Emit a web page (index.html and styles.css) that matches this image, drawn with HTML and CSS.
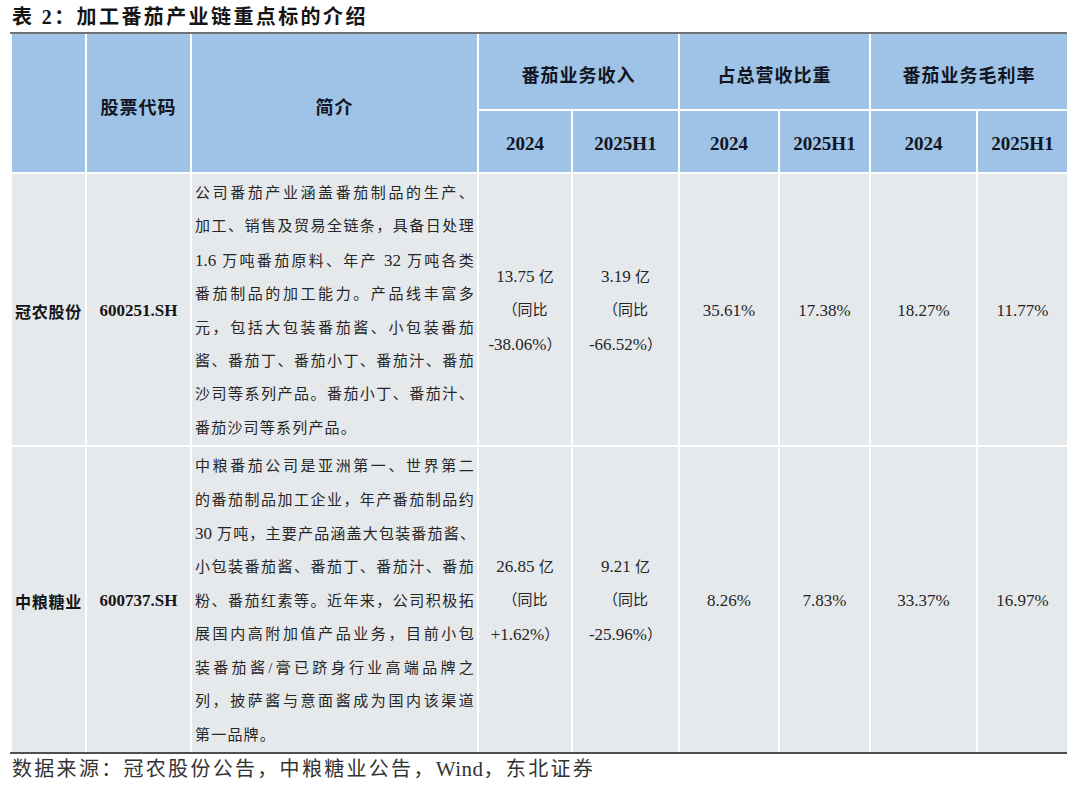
FILE: index.html
```html
<!DOCTYPE html>
<html lang="zh-CN">
<head>
<meta charset="utf-8">
<title>加工番茄产业链重点标的介绍</title>
<link rel="stylesheet" href="styles.css">
</head>
<body>
<div class="page">
  <h1 class="title">表 <span class="lat">2</span>：加工番茄产业链重点标的介绍</h1>
  <div class="figure">
    <div class="grid">
      <div class="cell th tall"></div>
      <div class="cell th tall">股票代码</div>
      <div class="cell th tall">简介</div>
      <div class="cell th group">番茄业务收入</div>
      <div class="cell th group">占总营收比重</div>
      <div class="cell th group">番茄业务毛利率</div>
      <div class="cell th sub">2024</div>
      <div class="cell th sub">2025H1</div>
      <div class="cell th sub">2024</div>
      <div class="cell th sub">2025H1</div>
      <div class="cell th sub">2024</div>
      <div class="cell th sub">2025H1</div>

      <div class="cell name">冠农股份</div>
      <div class="cell code">600251.SH</div>
      <div class="cell desc">
        <span class="ln">公司番茄产业涵盖番茄制品的生产、</span>
        <span class="ln">加工、销售及贸易全链条，具备日处理</span>
        <span class="ln"><span class="lat">1.6</span> 万吨番茄原料、年产 <span class="lat">32</span> 万吨各类</span>
        <span class="ln">番茄制品的加工能力。产品线丰富多</span>
        <span class="ln">元，包括大包装番茄酱、小包装番茄</span>
        <span class="ln">酱、番茄丁、番茄小丁、番茄汁、番茄</span>
        <span class="ln">沙司等系列产品。番茄小丁、番茄汁、</span>
        <span class="ln end">番茄沙司等系列产品。</span>
      </div>
      <div class="cell val"><span class="stack"><span>13.75 <span class="cn">亿</span></span><span class="cn">（同比</span><span>-38.06%<span class="cn">）</span></span></span></div>
      <div class="cell val"><span class="stack"><span>3.19 <span class="cn">亿</span></span><span class="cn">（同比</span><span>-66.52%<span class="cn">）</span></span></span></div>
      <div class="cell val">35.61%</div>
      <div class="cell val">17.38%</div>
      <div class="cell val">18.27%</div>
      <div class="cell val">11.77%</div>

      <div class="cell name">中粮糖业</div>
      <div class="cell code">600737.SH</div>
      <div class="cell desc">
        <span class="ln">中粮番茄公司是亚洲第一、世界第二</span>
        <span class="ln">的番茄制品加工企业，年产番茄制品约</span>
        <span class="ln"><span class="lat">30</span> 万吨，主要产品涵盖大包装番茄酱、</span>
        <span class="ln">小包装番茄酱、番茄丁、番茄汁、番茄</span>
        <span class="ln">粉、番茄红素等。近年来，公司积极拓</span>
        <span class="ln">展国内高附加值产品业务，目前小包</span>
        <span class="ln">装番茄酱/膏已跻身行业高端品牌之</span>
        <span class="ln">列，披萨酱与意面酱成为国内该渠道</span>
        <span class="ln end">第一品牌。</span>
      </div>
      <div class="cell val"><span class="stack"><span>26.85 <span class="cn">亿</span></span><span class="cn">（同比</span><span>+1.62%<span class="cn">）</span></span></span></div>
      <div class="cell val"><span class="stack"><span>9.21 <span class="cn">亿</span></span><span class="cn">（同比</span><span>-25.96%<span class="cn">）</span></span></span></div>
      <div class="cell val">8.26%</div>
      <div class="cell val">7.83%</div>
      <div class="cell val">33.37%</div>
      <div class="cell val">16.97%</div>
    </div>
  </div>
  <p class="source">数据来源：冠农股份公告，中粮糖业公告，<span class="lat">Wind</span>，东北证券</p>
</div>
</body>
</html>
```

FILE: styles.css
```css
html, body {
  margin: 0;
  padding: 0;
  background: #ffffff;
}

body {
  font-family: "Liberation Serif", "Noto Sans CJK SC", serif;
  color: #1f1f1f;
}

.page {
  width: 1080px;
}

.title {
  margin: 0;
  padding: 2px 0 0 12px;
  height: 30px;
  line-height: 30px;
  font-size: 20px;
  font-weight: 700;
  letter-spacing: 2.4px;
  color: #151515;
  white-space: nowrap;
}

.title .lat {
  letter-spacing: 2.4px;
}

.figure {
  margin-left: 10px;
  width: 1057px;
  padding-left: 2px;
  box-sizing: border-box;
  border-top: 2px solid #727272;
  border-bottom: 2px solid #4f4f4f;
}

.grid {
  display: grid;
  grid-template-columns: 73px 103px 285px 92px 105px 98px 89px 105px 89px;
  grid-template-rows: 75px 61px auto auto;
  gap: 2px;
  width: 1055px;
  background: #ffffff;
}

.cell {
  background: #e6e9ec;
  display: flex;
  align-items: center;
  justify-content: center;
  text-align: center;
}

.th {
  background: #9ec3e6;
  color: #111522;
  font-weight: 700;
  font-size: 18px;
  letter-spacing: 1px;
  padding-top: 5px;
  box-sizing: border-box;
}

.tall {
  grid-row: span 2;
}

.group {
  grid-column: span 2;
}

.sub {
  font-size: 19px;
  letter-spacing: 0;
}

.name {
  font-size: 16px;
  font-weight: 700;
  letter-spacing: 0.8px;
  color: #151515;
  padding-top: 3px;
  box-sizing: border-box;
}

.code {
  font-size: 17px;
  font-weight: 700;
  color: #151515;
  padding-top: 3px;
  box-sizing: border-box;
}

.desc {
  display: block;
  text-align: left;
  padding: 3px 2px 0 3px;
  font-size: 15px;
  line-height: 33.4px;
  letter-spacing: 1.2px;
  color: #262626;
}

.desc .lat {
  font-size: 17px;
  letter-spacing: 0;
}

.ln {
  display: block;
  white-space: nowrap;
  text-align: justify;
  text-align-last: justify;
}

.ln.end {
  text-align-last: left;
}

.val {
  font-size: 17px;
  color: #262626;
  padding-top: 3px;
  box-sizing: border-box;
}

.stack {
  display: flex;
  flex-direction: column;
  align-items: center;
  line-height: 33.5px;
}

.cn {
  font-size: 15px;
}

.source {
  margin: 0;
  padding-left: 12px;
  height: 30px;
  line-height: 30px;
  font-size: 20px;
  letter-spacing: 2.3px;
  color: #333333;
  white-space: nowrap;
}

.source .lat {
  font-size: 21px;
  letter-spacing: 0.5px;
}
```
